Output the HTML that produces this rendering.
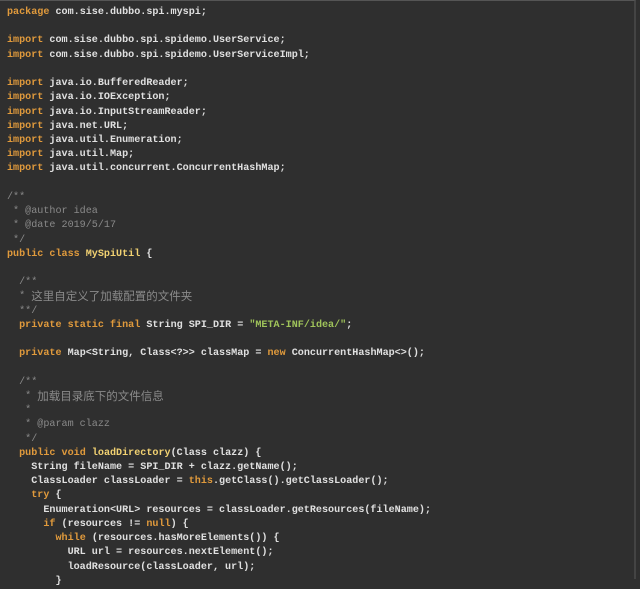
<!DOCTYPE html>
<html><head><meta charset="utf-8"><style>
html,body{margin:0;padding:0;background:#2f2f2f;}
body{width:640px;height:579px;overflow:hidden;position:relative;}
.b{position:absolute;left:0;top:0;width:636px;height:579px;border-top:1px solid #555;border-right:2px solid #444;box-sizing:border-box;}
pre{position:absolute;left:7px;top:6px;margin:0;font-family:"Liberation Mono",monospace;font-size:10.1px;line-height:14.22px;color:#e0e0e0;font-weight:bold;}
.k{color:#e09a3c}.m{color:#f2d272}.s{color:#9fc35a}.c{color:#8a8a8a;font-weight:normal}
.z{font-family:"Liberation Sans","Noto Sans CJK SC",sans-serif;font-size:11.5px;font-weight:normal;display:inline-block;height:14.22px;line-height:14.22px;vertical-align:top}
</style></head><body><div class="b"></div><pre><span class="k">package</span> com.sise.dubbo.spi.myspi;

<span class="k">import</span> com.sise.dubbo.spi.spidemo.UserService;
<span class="k">import</span> com.sise.dubbo.spi.spidemo.UserServiceImpl;

<span class="k">import</span> java.io.BufferedReader;
<span class="k">import</span> java.io.IOException;
<span class="k">import</span> java.io.InputStreamReader;
<span class="k">import</span> java.net.URL;
<span class="k">import</span> java.util.Enumeration;
<span class="k">import</span> java.util.Map;
<span class="k">import</span> java.util.concurrent.ConcurrentHashMap;

<span class="c">/**
 * @author idea
 * @date 2019/5/17
 */</span>
<span class="k">public class</span> <span class="m">MySpiUtil</span> {

  <span class="c">/**
  * <span class="z">这里自定义了加载配置的文件夹</span>
  **/</span>
  <span class="k">private static final</span> String SPI_DIR = <span class="s">"META-INF/idea/"</span>;

  <span class="k">private</span> Map&lt;String, Class&lt;?&gt;&gt; classMap = <span class="k">new</span> ConcurrentHashMap&lt;&gt;();

  <span class="c">/**
   * <span class="z">加载目录底下的文件信息</span>
   *
   * @param clazz
   */</span>
  <span class="k">public void</span> <span class="m">loadDirectory</span>(Class clazz) {
    String fileName = SPI_DIR + clazz.getName();
    ClassLoader classLoader = <span class="k">this</span>.getClass().getClassLoader();
    <span class="k">try</span> {
      Enumeration&lt;URL&gt; resources = classLoader.getResources(fileName);
      <span class="k">if</span> (resources != <span class="k">null</span>) {
        <span class="k">while</span> (resources.hasMoreElements()) {
          URL url = resources.nextElement();
          loadResource(classLoader, url);
        }</pre></body></html>
